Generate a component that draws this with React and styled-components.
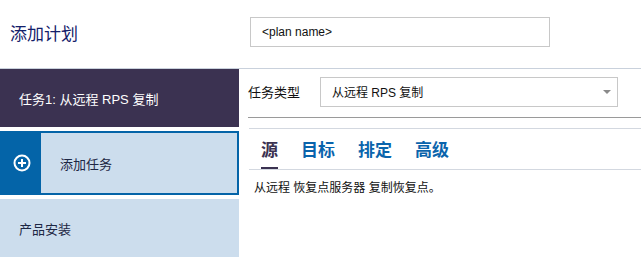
import React from 'react';
import styled, { createGlobalStyle } from 'styled-components';

const GlobalStyle = createGlobalStyle`
  html, body {
    margin: 0;
    padding: 0;
    background: #ffffff;
  }
  body {
    font-family: "Liberation Sans", "Noto Sans CJK SC", sans-serif;
  }
`;

const Page = styled.div`
  width: 641px;
  height: 264px;
  overflow: hidden;
  background: #ffffff;
`;

const Header = styled.div`
  height: 69px;
  display: flex;
  align-items: center;
  border-bottom: 1px solid #c9d1dc;
  box-sizing: border-box;
`;

const Title = styled.div`
  width: 250px;
  padding-left: 10px;
  box-sizing: border-box;
  font-size: 17px;
  color: #13206a;
  margin-top: -3px;
`;

const NameInput = styled.div`
  width: 300px;
  height: 30px;
  box-sizing: border-box;
  border: 1px solid #c8c8c8;
  display: flex;
  align-items: center;
  padding-left: 11px;
  font-size: 12px;
  color: #111;
  margin-top: -5px;
`;

const Body = styled.div`
  display: flex;
`;

const Sidebar = styled.div`
  width: 239px;
  display: flex;
  flex-direction: column;
  gap: 4px;
`;

const NavItem = styled.div`
  height: 58px;
  display: flex;
  align-items: center;
  padding-left: 19px;
  font-size: 13px;
  background: ${(p) => (p.$active ? '#3b3251' : '#ccdded')};
  color: ${(p) => (p.$active ? '#ffffff' : '#1d2744')};
`;

const AddItem = styled.div`
  height: 64px;
  box-sizing: border-box;
  border: 2px solid #0464a8;
  display: flex;
  background: #ccdded;
`;

const AddIcon = styled.div`
  width: 39px;
  background: #0464a8;
  display: flex;
  align-items: center;
  justify-content: center;
`;

const AddLabel = styled.div`
  display: flex;
  align-items: center;
  padding-left: 19px;
  font-size: 13px;
  color: #1d2744;
`;

const Main = styled.div`
  flex: 1;
  padding-left: 10px;
`;

const TypeRow = styled.div`
  display: flex;
  align-items: center;
  height: 48px;
  border-bottom: 1px solid #9a9a9a;
  margin-left: -1px;
`;

const TypeLabel = styled.div`
  width: 72px;
  font-size: 13px;
  color: #111;
  margin-top: -4px;
`;

const Select = styled.div`
  width: 298px;
  height: 30px;
  box-sizing: border-box;
  border: 1px solid #c8c8c8;
  display: flex;
  align-items: center;
  justify-content: space-between;
  padding: 0 6px 0 11px;
  font-size: 12px;
  color: #111;
  margin-top: -3px;
`;

const Caret = styled.span`
  width: 0;
  height: 0;
  border-left: 4px solid transparent;
  border-right: 4px solid transparent;
  border-top: 4px solid #8a8a8a;
`;

const Tabs = styled.div`
  margin-top: 10px;
  border-top: 1px solid #d3d8e0;
  border-bottom: 1px solid #d3d8e0;
  height: 40px;
  display: flex;
  align-items: stretch;
  padding-left: 12px;
  gap: 23px;
`;

const Tab = styled.div`
  display: flex;
  align-items: center;
  font-size: 17px;
  font-weight: bold;
  color: ${(p) => (p.$active ? '#3b3251' : '#0a64ac')};
  border-bottom: 2px solid ${(p) => (p.$active ? '#3b3251' : 'transparent')};
  box-sizing: border-box;
  padding-top: 1px;
`;

const Description = styled.div`
  padding: 8px 0 0 5px;
  font-size: 12px;
  color: #111;
`;

const PlusCircle = () => (
  <svg width="18" height="18" viewBox="0 0 18 18">
    <circle cx="9" cy="9" r="7.5" fill="none" stroke="#fff" strokeWidth="2" />
    <path d="M9 5v8M5 9h8" stroke="#fff" strokeWidth="2" />
  </svg>
);

export default function App() {
  return (
    <Page>
      <GlobalStyle />
      <Header>
        <Title>添加计划</Title>
        <NameInput>&lt;plan name&gt;</NameInput>
      </Header>
      <Body>
        <Sidebar>
          <NavItem $active>任务1: 从远程 RPS 复制</NavItem>
          <AddItem>
            <AddIcon>
              <PlusCircle />
            </AddIcon>
            <AddLabel>添加任务</AddLabel>
          </AddItem>
          <NavItem>产品安装</NavItem>
        </Sidebar>
        <Main>
          <TypeRow>
            <TypeLabel>任务类型</TypeLabel>
            <Select>
              从远程 RPS 复制
              <Caret />
            </Select>
          </TypeRow>
          <Tabs>
            <Tab $active>源</Tab>
            <Tab>目标</Tab>
            <Tab>排定</Tab>
            <Tab>高级</Tab>
          </Tabs>
          <Description>从远程 恢复点服务器 复制恢复点。</Description>
        </Main>
      </Body>
    </Page>
  );
}
